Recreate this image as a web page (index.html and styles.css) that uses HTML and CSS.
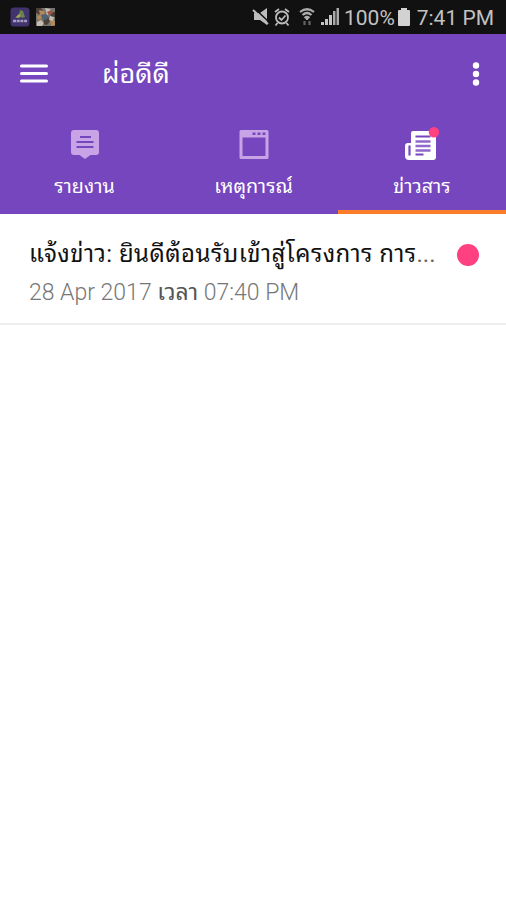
FILE: index.html
```html
<!DOCTYPE html>
<html lang="th">
<head>
<meta charset="utf-8">
<title>ผ่อดีดี</title>
<link rel="stylesheet" href="styles.css">
</head>
<body>
<div class="status">
  <svg class="apps" width="46" height="20" viewBox="0 0 46 20">
    <rect x="0.5" y="0.5" width="19" height="19" rx="3.5" fill="#40336e"/>
    <path d="M5 11l4-4 1-4 3 1 2 6-3 1-2-2-2 2z" fill="#68834b"/>
    <path d="M6 10l3-3 2 2-2 2z" fill="#a6a25a"/>
    <path d="M3 14h14" stroke="#a59bbd" stroke-width="2.5" stroke-dasharray="3 .7"/>
    <rect x="26" y="1" width="19" height="18" fill="#777570"/>
    <path d="M26 1h5l3 4-3 3-5-2zM34 12l4-2 2 4-3 4-4-1zM40 5h5v5h-4z" fill="#4a4038"/>
    <path d="M29 3l5 1 1 3-5 1zM27 9l4-1 2 3-5 2zM40 13l5 1v4l-4 1z" fill="#b58a58"/>
    <path d="M35 1l5 1 2 4-5 2zM27 15l4-2 3 3-2 3h-5zM40 9l4 1-1 4-4-1z" fill="#c6bcaf"/>
    <path d="M37 5l4-2 2 3-4 2z" fill="#a35343"/>
    <path d="M31 8l4-1 4 3-3 3-4-1z" fill="#4e6373"/>
  </svg>
  <svg class="signals" width="88" height="22" viewBox="0 0 88 22">
    <path d="M2 7h6l7-5v17l-7-5H2z" fill="#bcbcbc"/>
    <path d="M2 2l15 14" stroke="#111" stroke-width="1.5"/>
    <path d="M1 4l15 14" stroke="#bcbcbc" stroke-width="2"/>
    <g fill="none" stroke="#bcbcbc" stroke-width="1.8">
      <circle cx="30" cy="11.5" r="6"/><path d="M27 11.5l2.500 2.500 4-4.500M23 6l4-3M33 3l4 3M25.500 17l-2 2.500M34.500 17l2 2.500"/>
    </g>
    <g fill="none" stroke="#aaa" stroke-width="2.2">
      <path d="M48 6q7-5.500 14 0M50.500 9q4.500-4 9 0M52.500 12q2.500-2 5 0M55 11v3"/>
      <path d="M52.500 15v4M57.500 15v4" stroke="#666"/>
    </g>
    <path d="M69 16h3v3h-3zM73 13h3v6h-3zM77 9h3v10h-3z" fill="#c4c4c4"/>
    <path d="M81 5h2.500v14H81zM84.500 2H87v17h-2.500z" fill="#aaa"/>
  </svg>
  <span class="percent">100%</span>
  <svg class="battery" width="12" height="18" viewBox="0 0 12 18"><path d="M3 0h6v2h2q1 0 1 1v14q0 1-1 1H1q-1 0-1-1V3q0-1 1-1h2z" fill="#d2d2d2"/></svg>
  <span class="time">7:41 PM</span>
</div>
<header>
  <div class="toolbar">
    <svg width="28" height="20" viewBox="0 0 28 20"><path d="M1.500 2h25M1.500 9.500h25M1.500 17h25" stroke="#fff" stroke-width="3" stroke-linecap="round"/></svg>
    <h1>ผ่อดีดี</h1>
    <svg width="8" height="24" viewBox="0 0 8 24" fill="#fff"><circle cx="4" cy="3.500" r="3.200"/><circle cx="4" cy="12" r="3.200"/><circle cx="4" cy="20.500" r="3.200"/></svg>
  </div>
  <nav>
    <div class="tab">
      <svg width="36" height="36" viewBox="0 0 36 36"><path d="M7 3h22q3 0 3 3v19q0 3-3 3h-5.500L18 32l-5.500-4H7q-3 0-3-3V6q0-3 3-3z" fill="#c8a4e7"/><path d="M13 10h11M9.500 15h17M9.500 20h17" stroke="#7646bf" stroke-width="2"/></svg>
      <span class="label">รายงาน</span>
    </div>
    <div class="tab">
      <svg width="36" height="36" viewBox="0 0 36 36"><path fill="#c8a4e7" fill-rule="evenodd" d="M5 3h26q1.500 0 1.500 1.500v26q0 1.500-1.500 1.500H5q-1.500 0-1.500-1.500v-26Q3.500 3 5 3zm1.500 7.500V29h23V10.500z"/><path d="M16.500 5.500h3v2.500h-3zM21.500 5.500h3v2.500h-3zM26.500 5.500h3v2.500h-3z" fill="#7646bf"/></svg>
      <span class="label">เหตุการณ์</span>
    </div>
    <div class="tab active">
      <svg width="36" height="36" viewBox="0 0 36 36"><path d="M9 4h20q3 0 3 3v23q0 3-3 3H5q-4 0-4-4V19q0-3 3-3h3V6q0-2 2-2z" fill="#fff"/><path d="M5.500 18.500v10M11.500 9.500h15M11.500 27.500h8" stroke="#7646bf" stroke-width="2.200"/><path d="M11.500 14.500h15M11.500 19h15M11.500 23.500h15" stroke="#8f69cc" stroke-width="2.400"/><circle cx="30" cy="5.300" r="5.200" fill="#ff4081"/></svg>
      <span class="label">ข่าวสาร</span>
    </div>
  </nav>
</header>
<main>
  <article>
    <div class="copy">
      <h2>แจ้งข่าว: ยินดีต้อนรับเข้าสู่โครงการ การ<span class="dots">...</span></h2>
      <p>28 Apr 2017 <span class="word">เวลา</span> 07:40 PM</p>
    </div>
    <i class="unread"></i>
  </article>
</main>
</body>
</html>
```
FILE: styles.css
```css
* { box-sizing: border-box; }
body { margin: 0; background: #fff; font-family: Roboto, "Noto Sans Thai Looped", "Noto Looped Thai", Loma, Waree, Garuda, sans-serif; height: 900px; overflow: hidden; }
svg { display: block; flex: none; }
.status { height: 34px; background: #111; display: flex; align-items: center; padding: 0 12px 0 10px; color: #c2c2c2; font-size: 21px; white-space: nowrap; }
.signals { margin-left: 196px; }
.percent { width: 50px; margin-left: 4px; padding-top: 2px; }
.battery { margin-left: 4px; }
.time { margin-left: auto; padding-top: 2px; }
header { height: 180px; background: #7646bf; color: #fff; }
.toolbar { height: 79px; display: flex; align-items: center; padding: 0 26px 0 20px; }
h1 { margin: 0 auto 0 54px; font-size: 27px; font-weight: 400; line-height: 40px; }
nav { height: 101px; display: grid; grid-template-columns: 169px 169px 168px; }
.tab { display: flex; flex-direction: column; align-items: center; padding-top: 14px; border-bottom: 4px solid transparent; }
.active { border-color: #fb7d2a; }
.label { font-size: 19.7px; line-height: 28px; margin-top: 10px; white-space: nowrap; }
article { height: 111px; border-bottom: 2px solid #eee; display: flex; padding: 24px 27px 0 29px; }
.copy { flex: 1; white-space: nowrap; }
h2 { margin: 0; font-size: 24px; font-weight: 400; line-height: 32px; color: #111; letter-spacing: .45px; }
.dots { color: #666; letter-spacing: 0; }
p { margin: 7px 0 0; font-size: 23px; font-weight: 300; line-height: 32px; color: #777; }
.word { color: #555; font-weight: 400; }
.unread { width: 22px; height: 22px; border-radius: 50%; background: #ff4081; margin-top: 6px; }
```
